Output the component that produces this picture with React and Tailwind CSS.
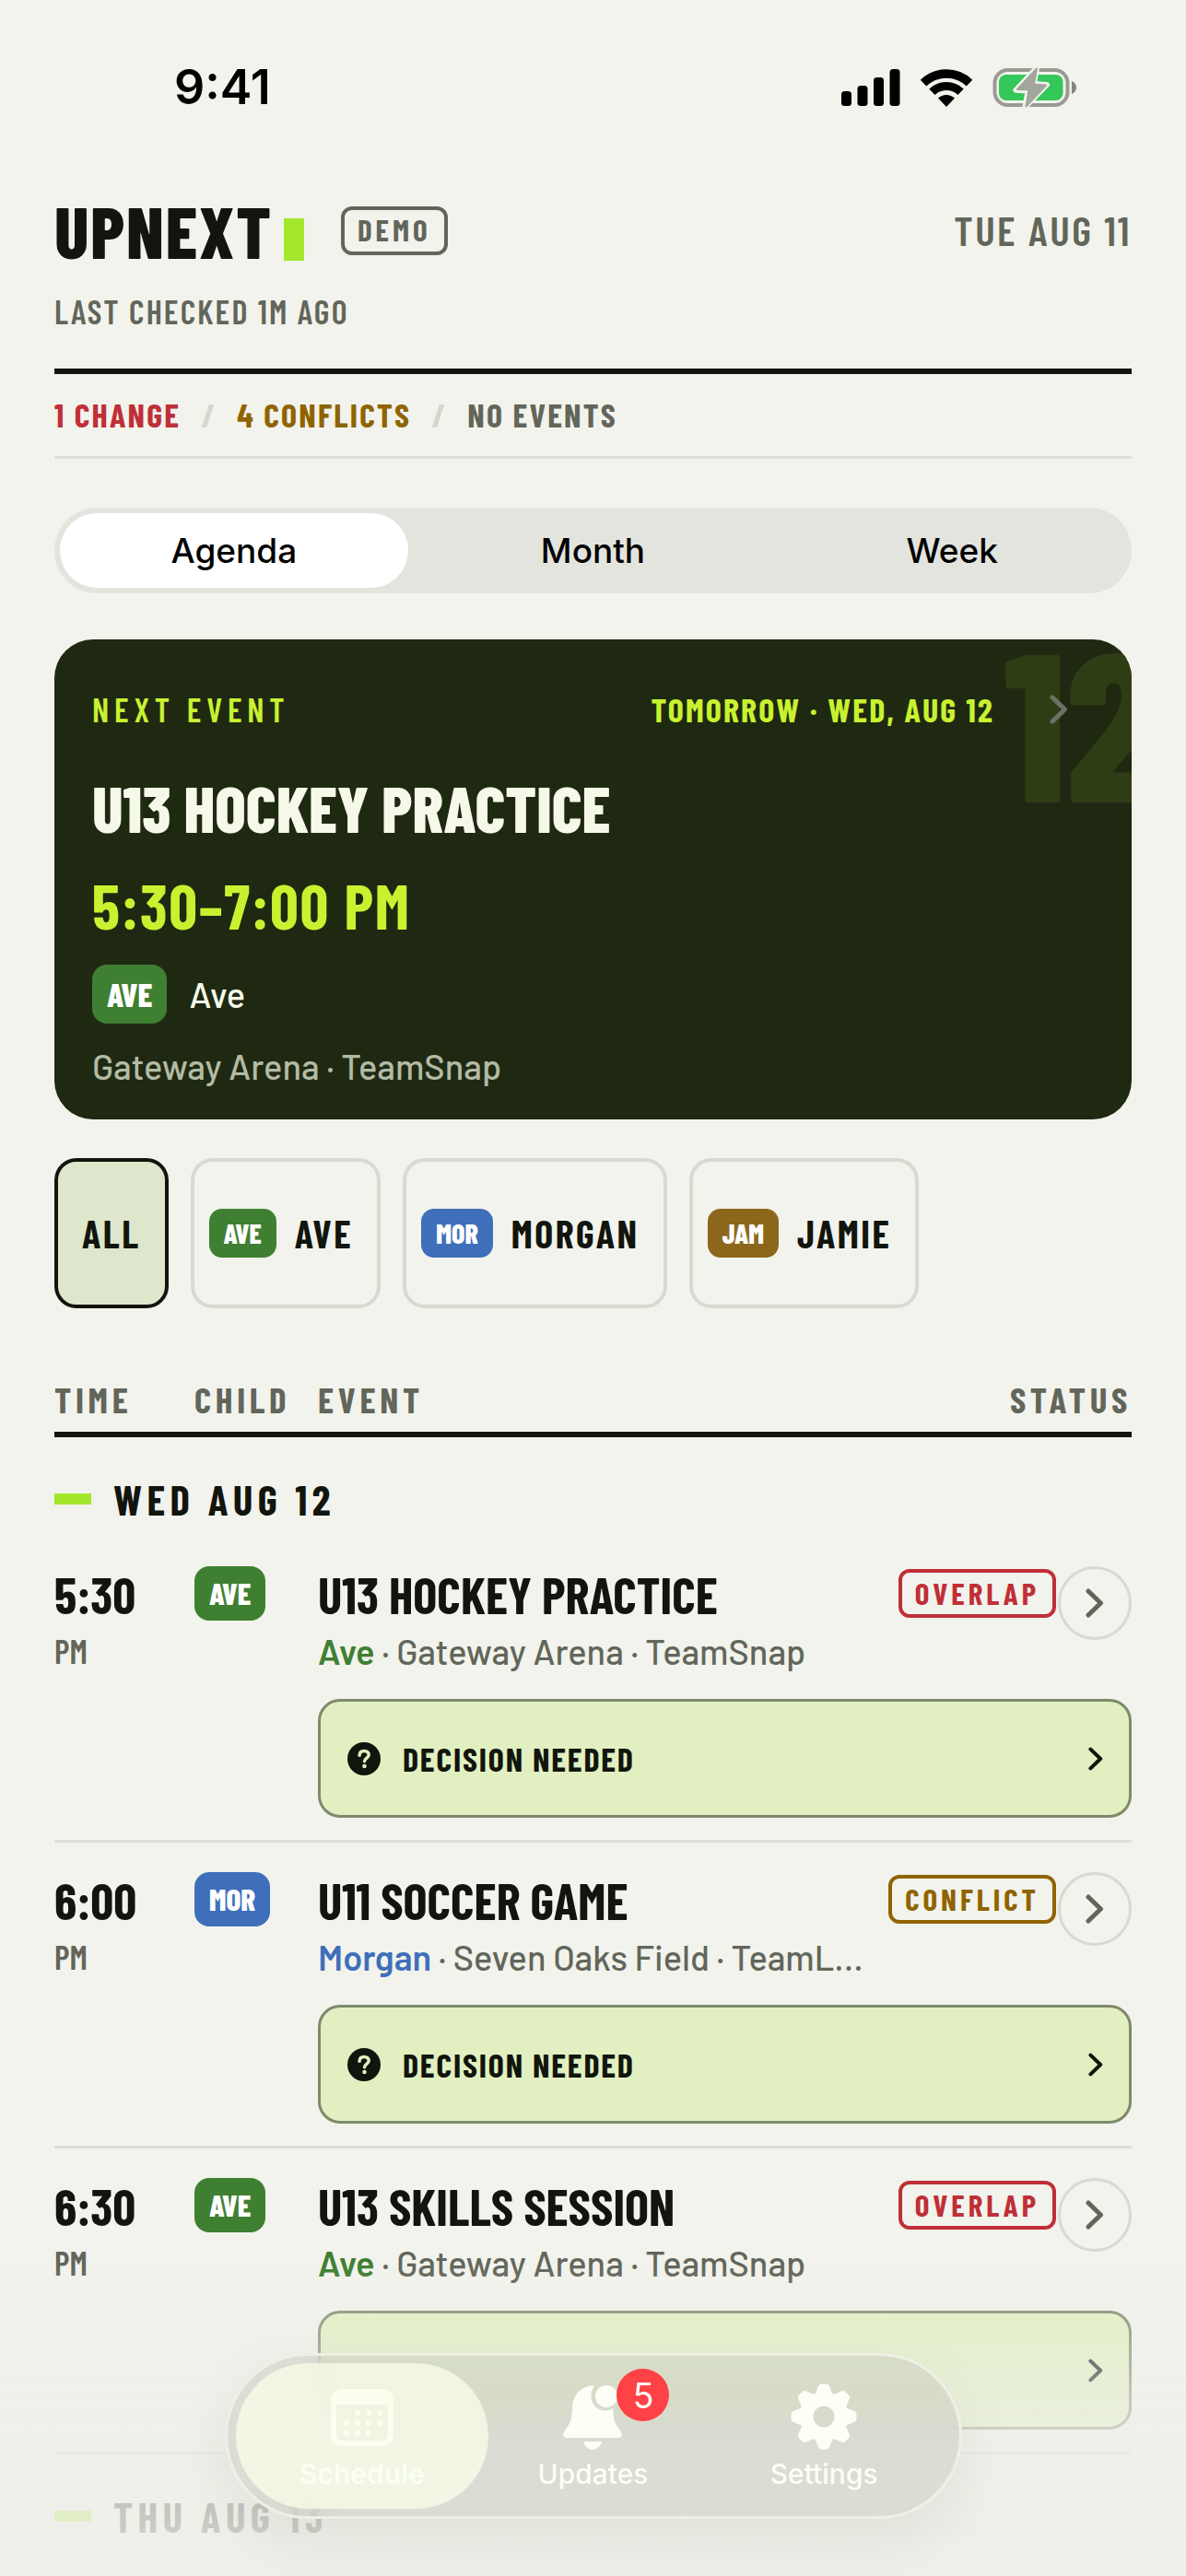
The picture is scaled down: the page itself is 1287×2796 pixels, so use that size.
import { useState } from 'react'
import clsx from 'clsx'

const KIDS = {
  ave: { tag: 'AVE', name: 'Ave', bg: 'bg-[#3f7f32]', text: 'text-[#3f7f32]' },
  morgan: { tag: 'MOR', name: 'Morgan', bg: 'bg-[#3f6fba]', text: 'text-[#3f6fba]' },
  jamie: { tag: 'JAM', name: 'Jamie', bg: 'bg-[#8c671b]', text: 'text-[#8c671b]' },
}

const STATUS_STYLES = {
  OVERLAP: 'border-[#c02f37] text-[#c02f37]',
  CONFLICT: 'border-[#8f6400] text-[#8f6400]',
}

const DAYS = [
  {
    label: 'WED AUG 12',
    events: [
      { time: '5:30', title: 'U13 HOCKEY PRACTICE', kid: 'ave', place: 'Gateway Arena · TeamSnap', status: 'OVERLAP', action: 'DECISION NEEDED' },
      { time: '6:00', title: 'U11 SOCCER GAME', kid: 'morgan', place: 'Seven Oaks Field · TeamL...', status: 'CONFLICT', action: 'DECISION NEEDED' },
      { time: '6:30', title: 'U13 SKILLS SESSION', kid: 'ave', place: 'Gateway Arena · TeamSnap', status: 'OVERLAP' },
    ],
  },
  { label: 'THU AUG 13', events: [] },
]

const VIEWS = ['Agenda', 'Month', 'Week']

function Chevron({ className }) {
  return (
    <svg viewBox="0 0 20 32" fill="none" stroke="currentColor" strokeWidth="5" strokeLinecap="round" strokeLinejoin="round" className={className} aria-hidden="true">
      <path d="M3 3L16.5 16L3 29" />
    </svg>
  )
}

function StatusBar() {
  return (
    <div className="flex h-[190px] items-center justify-between pr-[118px] pl-[189px] font-['Inter','Roboto',sans-serif] text-black">
      <span className="text-[52px] leading-none font-semibold">9:41</span>
      <div className="flex items-center gap-[22px]">
        <svg viewBox="0 0 64 40" className="h-10 w-16" fill="currentColor" aria-hidden="true">
          <rect x="0" y="24" width="11" height="16" rx="3.5" />
          <rect x="17.5" y="18" width="11" height="22" rx="3.5" />
          <rect x="35" y="9" width="11" height="31" rx="3.5" />
          <rect x="52.5" y="0" width="11" height="40" rx="3.5" />
        </svg>
        <svg viewBox="0 0 56 41" className="h-[41px] w-14" fill="none" stroke="currentColor" aria-hidden="true">
          <path d="M3 15.1A36 36 0 0 1 53 15.1" strokeWidth="9.5" />
          <path d="M12.4 24.8A22.5 22.5 0 0 1 43.6 24.8" strokeWidth="9" />
          <path d="M28 41L19 31.6A13 13 0 0 1 37 31.6Z" fill="currentColor" stroke="none" />
        </svg>
        <svg viewBox="0 0 92 44" className="h-11 w-[92px]" aria-hidden="true">
          <rect x="2.5" y="3" width="79" height="38" rx="14" fill="none" stroke="#999b93" strokeWidth="4" />
          <rect x="7" y="8" width="69.5" height="28" rx="8" fill="#34c759" />
          <path d="M86 15c3.500 1.500 5 4 5 7s-1.500 5.500-5 7z" fill="#85877f" />
          <path d="M48 .7L25.500 24.700L38.500 25.500L35.500 43L59 19L45 18Z" fill="#a3a69c" stroke="#f2f3ec" strokeWidth="6" strokeLinejoin="round" />
          <path d="M48 1.500L27 24L39.500 24.500L36.500 42.500L58 19.500L45 18.500Z" fill="#a3a69c" stroke="#a3a69c" strokeWidth="2" strokeLinejoin="round" />
        </svg>
      </div>
    </div>
  )
}

function Header() {
  return (
    <header className="border-b-[6px] border-[#11150d] pt-3 pb-[38px]">
      <div className="flex h-24 items-center">
        <h1 className="text-[78px] leading-none font-extrabold tracking-wide">UPNEXT</h1>
        <span className="mt-5 ml-3 h-[46px] w-[22px] bg-[#a3e62c]" />
        <span className="ml-10 flex h-[53px] items-center rounded-xl border-4 border-[#62665a] px-[14px] text-[33px] font-bold tracking-[0.12em] text-[#62665a]">
          DEMO
        </span>
        <time className="ml-auto text-[45px] font-semibold tracking-[0.06em] text-[#62665a]">TUE AUG 11</time>
      </div>
      <p className="mt-4 text-[36px] leading-[48px] font-semibold tracking-[0.06em] text-[#62665a]">LAST CHECKED 1M AGO</p>
    </header>
  )
}

function AlertLine() {
  return (
    <div className="flex gap-[22px] border-b-[3px] border-[#dcddd6] pt-5 pb-[21px] text-[36px] leading-[48px] font-bold tracking-[0.06em]">
      <span className="text-[#c02f37]">1 CHANGE</span>
      <span className="text-[#d5d7ce]">/</span>
      <span className="text-[#8f6400]">4 CONFLICTS</span>
      <span className="text-[#d5d7ce]">/</span>
      <span className="text-[#62665a]">NO EVENTS</span>
    </div>
  )
}

function ViewSwitch() {
  const [view, setView] = useState('Agenda')
  return (
    <div className="mt-[53px] grid h-[93px] grid-cols-3 rounded-full bg-[#e3e4de] py-[6px] font-['Inter','Roboto',sans-serif] text-[37px] font-medium text-black">
      {VIEWS.map((v) => (
        <button
          key={v}
          type="button"
          aria-pressed={v === view}
          onClick={() => setView(v)}
          className={clsx('mx-[6px] rounded-full', v === view && 'bg-white')}
        >
          {v}
        </button>
      ))}
    </div>
  )
}

function NextEvent() {
  return (
    <a href="#next" className="relative mt-[50px] block overflow-hidden rounded-[42px] bg-[#1f2912] px-[41px] pt-[52px] pb-[34px]">
      <span aria-hidden="true" className="absolute -top-7 -right-8 text-[228px] leading-[228px] font-extrabold text-[#2f3d15]">
        12
      </span>
      <div className="relative flex items-center text-[36px] leading-[48px] text-[#c8f230]">
        <span className="font-semibold tracking-[0.16em]">NEXT EVENT</span>
        <span className="ml-auto font-bold tracking-[0.06em]">TOMORROW · WED, AUG 12</span>
        <Chevron className="mr-7 ml-[60px] h-8 w-5 text-[#6a7263]" />
      </div>
      <h2 className="mt-10 text-[70px] leading-[84px] font-extrabold text-[#f6f9ea]">U13 HOCKEY PRACTICE</h2>
      <p className="mt-6 text-[68px] leading-[80px] font-bold tracking-wide text-[#c8f230]">5:30–7:00 PM</p>
      <div className="mt-[25px] flex items-center gap-6">
        <span className="flex h-16 items-center rounded-2xl bg-[#3f7f32] px-4 text-[36px] font-extrabold text-white">AVE</span>
        <span className="font-['Barlow','Roboto',sans-serif] text-[38px] leading-[48px] font-medium text-[#f6f9ea]">Ave</span>
      </div>
      <p className="mt-[22px] font-['Barlow','Roboto',sans-serif] text-[38px] leading-[48px] font-medium text-[#b3bba4]">Gateway Arena · TeamSnap</p>
    </a>
  )
}

function KidFilter() {
  const [active, setActive] = useState('all')
  const base = 'flex h-[163px] items-center rounded-3xl border-4 text-[42px] font-bold tracking-[0.06em]'
  return (
    <div className="mt-[42px] flex gap-6">
      <button
        type="button"
        onClick={() => setActive('all')}
        className={clsx(base, 'px-[26px]', active === 'all' ? 'border-[#11150d] bg-[#dee7cb]' : 'border-[#d8dad2]')}
      >
        ALL
      </button>
      {Object.entries(KIDS).map(([id, kid]) => (
        <button
          key={id}
          type="button"
          onClick={() => setActive(id)}
          className={clsx(base, 'gap-5 pr-[26px] pl-4', active === id ? 'border-[#11150d] bg-[#dee7cb]' : 'border-[#d8dad2]')}
        >
          <span className={clsx('flex h-[53px] items-center rounded-[14px] px-4 text-[30px] font-extrabold tracking-normal text-white', kid.bg)}>
            {kid.tag}
          </span>
          <span className="uppercase">{kid.name}</span>
        </button>
      ))}
    </div>
  )
}

function EventRows({ event }) {
  const kid = KIDS[event.kid]
  return (
    <>
      <tr className="align-top">
        <td rowSpan={2} className="border-b-[3px] border-[#dcddd6] pt-8">
          <p className="text-[55px] leading-[60px] font-bold">{event.time}</p>
          <p className="mt-2 text-[36px] leading-[48px] font-semibold text-[#62665a]">PM</p>
        </td>
        <td rowSpan={2} className="border-b-[3px] border-[#dcddd6] pt-8">
          <span className={clsx('inline-flex h-[59px] items-center rounded-2xl px-4 text-[33px] font-extrabold text-white', kid.bg)}>
            {kid.tag}
          </span>
        </td>
        <td className="pt-8 whitespace-nowrap">
          <h3 className="text-[55px] leading-[60px] font-bold">{event.title}</h3>
          <p className="mt-2 font-['Barlow','Roboto',sans-serif] text-[38px] leading-[48px] font-medium text-[#62665a]">
            <span className={clsx('font-semibold', kid.text)}>{kid.name}</span> · {event.place}
          </p>
        </td>
        <td className="pt-8">
          <div className="flex items-start justify-end gap-[2px]">
            <span className={clsx('mt-[3px] flex h-[53px] items-center rounded-xl border-4 px-[14px] text-[33px] font-bold tracking-[0.12em]', STATUS_STYLES[event.status])}>
              {event.status}
            </span>
            <button
              type="button"
              aria-label={`Open ${event.title}`}
              className="flex size-20 items-center justify-center rounded-full border-[3px] border-[#d8dad2] text-[#62665a]"
            >
              <Chevron className="h-8 w-5" />
            </button>
          </div>
        </td>
      </tr>
      <tr>
        <td colSpan={2} className="border-b-[3px] border-[#dcddd6] pt-7 pb-6">
          <button
            type="button"
            aria-label={`Decide on ${event.title}`}
            className="flex h-[129px] w-full items-center rounded-3xl border-[3px] border-[#7f8a6c] bg-[#e2f0c1] pr-7 pl-[29px] text-[36px] font-bold tracking-wider"
          >
            {event.action && (
              <>
                <svg viewBox="0 0 36 36" className="size-9" aria-hidden="true">
                  <circle cx="18" cy="18" r="18" fill="#11150d" />
                  <path d="M13 14.300c.2-3 2.200-4.800 5.200-4.800 3 0 5 1.700 5 4.300 0 3.500-4.700 3.800-4.700 7" fill="none" stroke="#e2f0c1" strokeWidth="3.500" strokeLinecap="round" />
                  <circle cx="18.500" cy="26" r="2.300" fill="#e2f0c1" />
                </svg>
                <span className="ml-6">{event.action}</span>
              </>
            )}
            <Chevron className="ml-auto h-[26px] w-4" />
          </button>
        </td>
      </tr>
    </>
  )
}

function Agenda() {
  const head = 'border-b-[6px] border-[#11150d] pb-[11px] font-bold'
  return (
    <table className="mt-[75px] w-full table-fixed border-separate border-spacing-0 text-left">
      <thead className="text-[39px] leading-[48px] tracking-[0.12em] text-[#62665a]">
        <tr>
          <th scope="col" className={clsx(head, 'w-[152px]')}>TIME</th>
          <th scope="col" className={clsx(head, 'w-[134px]')}>CHILD</th>
          <th scope="col" className={head}>EVENT</th>
          <th scope="col" className={clsx(head, 'w-[281px] text-right')}>STATUS</th>
        </tr>
      </thead>
      {DAYS.map((day) => (
        <tbody key={day.label}>
          <tr>
            <th scope="rowgroup" colSpan={4} className="pt-10 pb-[14px]">
              <div className="flex items-center gap-6 text-[45px] leading-[54px] font-bold tracking-[0.12em]">
                <span className="h-3 w-10 bg-[#a3e62c]" />
                {day.label}
              </div>
            </th>
          </tr>
          {day.events.map((event) => (
            <EventRows key={event.time} event={event} />
          ))}
        </tbody>
      ))}
    </table>
  )
}

function CalendarIcon() {
  return (
    <svg viewBox="0 0 68 62" className="h-[62px] w-[68px]" aria-hidden="true">
      <rect x="3" y="3" width="62" height="56" rx="9" fill="none" stroke="currentColor" strokeWidth="6" />
      <path d="M3 12a9 9 0 0 1 9-9h44a9 9 0 0 1 9 9v5H3z" fill="currentColor" />
      <g fill="currentColor">
        <circle cx="29" cy="26" r="3" />
        <circle cx="41" cy="26" r="3" />
        <circle cx="53" cy="26" r="3" />
        <circle cx="17" cy="37" r="3" />
        <circle cx="29" cy="37" r="3" />
        <circle cx="41" cy="37" r="3" />
        <circle cx="53" cy="37" r="3" />
        <circle cx="17" cy="48" r="3" />
        <circle cx="29" cy="48" r="3" />
        <circle cx="41" cy="48" r="3" />
      </g>
    </svg>
  )
}

function BellIcon() {
  return (
    <svg viewBox="0 0 64 70" className="h-[70px] w-16" fill="currentColor" aria-hidden="true">
      <path d="M34 1C31.500 4 30.500 8 30.500 12c0 9 6.500 15.500 15.500 15.500 3 0 6-.8 8.200-2.200.3 12 1.800 15.200 5.800 21 3.500 5 4.500 6.200 3.500 8.700-.7 1.500-2 2-4 2H4.500c-2 0-3.300-.5-4-2-1-2.500 0-3.700 3.500-8.700 5-7.300 5.500-11.300 6-22.300C10.600 11 18 3.500 27.500 1 29.500.3 32.500 0 34 1z" />
      <circle cx="47" cy="12" r="12" />
      <path d="M22 61h20c-1.500 5.500-5.500 9-10 9s-8.500-3.500-10-9z" />
    </svg>
  )
}

function GearIcon() {
  return (
    <svg viewBox="-36 -36 72 72" className="size-[72px]" fill="currentColor" aria-hidden="true">
      <circle r="19" fill="none" stroke="currentColor" strokeWidth="15" />
      {[0, 45, 90, 135, 180, 225, 270, 315].map((a) => (
        <path key={a} transform={`rotate(${a})`} d="M-10-23L-6-33Q-5-35.500-3-35.500H3Q5-35.500 6-33L10-23Z" />
      ))}
    </svg>
  )
}

function TabBar() {
  return (
    <nav className="mx-auto grid h-[180px] w-[800px] max-w-full grid-cols-3 rounded-full border-[3px] border-[#eef0e7] bg-[#b6b9ae]/35 px-[21px] py-2 font-['Inter','Roboto',sans-serif] text-[30px] leading-9 font-medium text-[#fcfff5] shadow-[0_24px_60px_rgba(120,125,110,0.12)] backdrop-blur-md">
      <a href="#schedule" aria-current="page" className="-mx-3 flex flex-col items-center justify-end rounded-full bg-[#f8fdea]/75 pb-5 font-semibold text-[#fafff0]">
        <CalendarIcon />
        <span className="mt-3">Schedule</span>
      </a>
      <a href="#updates" className="relative flex flex-col items-center justify-end pb-5">
        <BellIcon />
        <span className="absolute top-[6px] left-1/2 ml-[26px] flex size-[57px] items-center justify-center rounded-full bg-[#ff4245] text-[38px] font-normal text-white">
          5
        </span>
        <span className="mt-2">Updates</span>
      </a>
      <a href="#settings" className="flex flex-col items-center justify-end pb-5">
        <GearIcon />
        <span className="mt-2">Settings</span>
      </a>
    </nav>
  )
}

export default function App() {
  return (
    <div className="min-h-screen bg-[#f2f3ec] font-['Barlow_Condensed','Roboto_Condensed',sans-serif] text-[#11150d]">
      <StatusBar />
      <main className="px-[59px]">
        <Header />
        <AlertLine />
        <ViewSwitch />
        <NextEvent />
        <KidFilter />
        <Agenda />
      </main>
      <div className="pointer-events-none fixed inset-x-0 bottom-0 h-[340px] bg-linear-to-b from-[#eeefe9]/0 via-[#eeefe9]/70 to-[#eeefe9]/90" />
      <div className="fixed inset-x-0 bottom-[62px]">
        <TabBar />
      </div>
    </div>
  )
}
